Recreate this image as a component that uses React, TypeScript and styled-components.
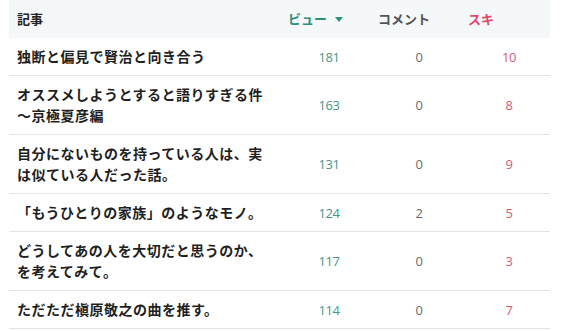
import React from "react";
import styled, { createGlobalStyle } from "styled-components";

const GlobalStyle = createGlobalStyle`
  body {
    margin: 0;
    background: #ffffff;
    font-family: "Noto Sans CJK JP", "Noto Sans", sans-serif;
  }
`;

type Tone = "view" | "comment" | "like";

const colors: Record<Tone, { head: string; cell: string }> = {
  view: { head: "#2b8f7e", cell: "#479786" },
  comment: { head: "#50565b", cell: "#676c70" },
  like: { head: "#e0476a", cell: "#d65a76" },
};

const Table = styled.div`
  margin-left: 9px;
  width: 541px;
`;

const Row = styled.div<{ $head?: boolean }>`
  display: grid;
  grid-template-columns: 271px 90px 90px 90px;
  align-items: center;
  background: ${({ $head }) => ($head ? "#f5f8f9" : "#ffffff")};
  border-bottom: ${({ $head }) => ($head ? "none" : "1px solid #e1e3e4")};
  min-height: ${({ $head }) => ($head ? "38px" : "37px")};
`;

const HeadCell = styled.div<{ $tone?: Tone }>`
  padding-left: 8px;
  font-size: 13px;
  font-weight: 700;
  color: ${({ $tone }) => ($tone ? colors[$tone].head : "#222222")};
  display: flex;
  align-items: center;
  gap: 8px;
  line-height: 20px;
`;

const Title = styled.div`
  padding: 8px;
  font-size: 14px;
  font-weight: 700;
  line-height: 21px;
  letter-spacing: 0.5px;
  line-break: loose;
  color: #1f1f1f;
`;

const Num = styled.div<{ $tone: Tone }>`
  padding-left: 8px;
  text-align: center;
  font-family: "Open Sans", "Noto Sans", sans-serif;
  font-size: 13px;
  letter-spacing: -0.4px;
  color: ${({ $tone }) => colors[$tone].cell};
`;

const Caret = styled.span`
  width: 0;
  height: 0;
  border-left: 4.5px solid transparent;
  border-right: 4.5px solid transparent;
  border-top: 5px solid #2b8f7e;
  margin-top: 1px;
`;

const articles = [
  { title: "独断と偏見で賢治と向き合う", views: 181, comments: 0, likes: 10 },
  { title: "オススメしようとすると語りすぎる件〜京極夏彦編", views: 163, comments: 0, likes: 8 },
  { title: "自分にないものを持っている人は、実は似ている人だった話。", views: 131, comments: 0, likes: 9 },
  { title: "「もうひとりの家族」のようなモノ。", views: 124, comments: 2, likes: 5 },
  { title: "どうしてあの人を大切だと思うのか、を考えてみて。", views: 117, comments: 0, likes: 3 },
  { title: "ただただ槇原敬之の曲を推す。", views: 114, comments: 0, likes: 7 },
];

const App = () => {
  return (
    <>
      <GlobalStyle />
      <Table lang="ja">
        <Row $head>
          <HeadCell>記事</HeadCell>
          <HeadCell $tone="view">
            ビュー <Caret />
          </HeadCell>
          <HeadCell $tone="comment">コメント</HeadCell>
          <HeadCell $tone="like">スキ</HeadCell>
        </Row>
        {articles.map((a) => (
          <Row key={a.title}>
            <Title>{a.title}</Title>
            <Num $tone="view">{a.views}</Num>
            <Num $tone="comment">{a.comments}</Num>
            <Num $tone="like">{a.likes}</Num>
          </Row>
        ))}
      </Table>
    </>
  );
};

export default App;
